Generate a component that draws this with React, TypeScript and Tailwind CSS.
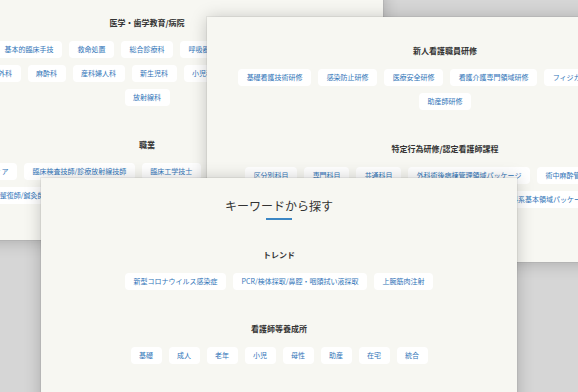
const chipText = "text-[#2f74b8]";

function Chip({ label }: { label: string }) {
  return (
    <span
      className={`flex h-[17px] shrink-0 items-center whitespace-nowrap rounded-[4px] bg-white px-[8.5px] text-[7px] leading-none ${chipText}`}
    >
      {label}
    </span>
  );
}

function Section({ title, rows, className = "" }: { title: string; rows: string[][]; className?: string }) {
  return (
    <div className={className}>
      <h3 className="text-center text-[8px] font-bold leading-[12px] text-[#333]">{title}</h3>
      <div className="mt-[12px] flex flex-col gap-[7px]">
        {rows.map((row, i) => (
          <div key={i} className="flex justify-center gap-[7px]">
            {row.map((c) => (
              <Chip key={c} label={c} />
            ))}
          </div>
        ))}
      </div>
    </div>
  );
}

const cardBase =
  "absolute overflow-hidden bg-[#f7f7f2] shadow-[0_1px_16px_rgba(0,0,0,0.22),0_0_0_1px_rgba(0,0,0,0.05)]";

export default function App() {
  return (
    <div className="relative h-[392px] w-[578px] overflow-hidden bg-[#d6d6d6] font-['Noto_Sans_CJK_JP','Noto_Sans',sans-serif]">
      {/* back card */}
      <div className={`${cardBase} left-[-89px] top-[-11px] h-[251px] w-[472px] pt-[28px]`}>
        <Section
          title="医学・歯学教育/病院"
          rows={[
            ["基本的臨床手技", "救命処置", "総合診療科", "呼吸器内科", "内分泌代謝科"],
            ["外科", "麻酔科", "産科婦人科", "新生児科", "小児科", "皮膚科", "眼科"],
            ["放射線科"],
          ]}
        />
        <Section
          className="mt-[33px]"
          title="職業"
          rows={[
            ["ボランティア", "臨床検査技師/診療放射線技師", "臨床工学技士", "作業療法士/理学療法士", "医師"],
            ["柔道整復師/鍼灸師", "あん摩マッサージ指圧師", "歯科衛生士", "言語聴覚士", "薬剤師"],
          ]}
        />
      </div>

      {/* middle card */}
      <div className={`${cardBase} left-[207px] top-[17px] h-[245px] w-[476px] pt-[28px]`}>
        <Section
          title="新人看護職員研修"
          rows={[
            ["基礎看護技術研修", "感染防止研修", "医療安全研修", "看護介護専門領域研修", "フィジカルアセスメント研修"],
            ["助産師研修"],
          ]}
        />
        <Section
          className="mt-[33px]"
          title="特定行為研修/認定看護師課程"
          rows={[
            ["区分別科目", "専門科目", "共通科目", "外科術後病棟管理領域パッケージ", "術中麻酔管理領域パッケージ"],
            ["在宅・慢性期領域パッケージ", "救急領域パッケージ", "外科系基本領域パッケージ"],
            ["集中治療領域パッケージ"],
          ]}
        />
      </div>

      {/* front card */}
      <div className={`${cardBase} left-[41px] top-[178px] h-[260px] w-[476px] pt-[20px]`}>
        <h2 className="text-center text-[12px] leading-[16px] text-[#333]">キーワードから探す</h2>
        <div className="mx-auto mt-[4px] h-[1.5px] w-[26px] bg-[#3b86c4]" />
        <Section
          className="mt-[29px]"
          title="トレンド"
          rows={[["新型コロナウイルス感染症", "PCR/検体採取/鼻腔・咽頭拭い液採取", "上腕筋肉注射"]]}
        />
        <Section
          className="mt-[33px]"
          title="看護師等養成所"
          rows={[["基礎", "成人", "老年", "小児", "母性", "助産", "在宅", "統合"]]}
        />
      </div>
    </div>
  );
}
